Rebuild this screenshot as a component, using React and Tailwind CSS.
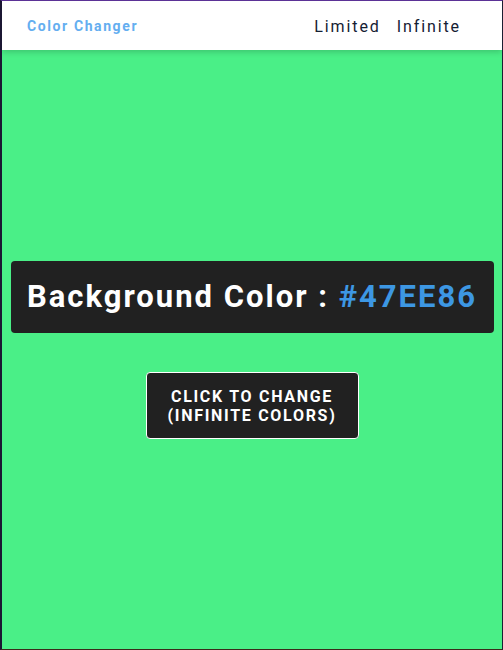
import React from "react";

export default function App() {
  return (
    <div
      className="w-[503px] h-[650px] flex flex-col border-t border-t-[#5b3296] border-l-2 border-l-[#1b1633] border-r border-r-[#1b1f33] border-b border-b-[#3a2a1a] bg-[#4aef87] overflow-hidden"
      style={{ fontFamily: "Roboto, 'Liberation Sans', sans-serif" }}
    >
      <header className="h-[49px] shrink-0 bg-white flex items-center justify-between pl-[25px] pr-[41px] pt-[2px] shadow-[0_2px_6px_rgba(0,0,0,0.18)] relative z-10">
        <span className="text-[14px] font-bold tracking-[1.6px] text-[#64aef0]">Color Changer</span>
        <nav className="flex gap-[16px] text-[16px] tracking-[1.9px] text-[#142033]">
          <span>Limited</span>
          <span>Infinite</span>
        </nav>
      </header>
      <main className="flex-1 flex flex-col items-center pt-[211px]">
        <div className="w-[483px] h-[72px] bg-[#212121] rounded-[4px] flex items-center justify-center">
          <h1 className="text-[31px] font-bold tracking-[2px] text-white">
            Background Color : <span className="text-[#3d97e3]">#47EE86</span>
          </h1>
        </div>
        <button className="mt-[39px] w-[213px] h-[67px] bg-[#212121] border border-white rounded-[4px] text-white text-[16px] font-bold tracking-[1.7px] leading-[19px] uppercase">
          Click to change
          <br />
          (Infinite colors)
        </button>
      </main>
    </div>
  );
}
